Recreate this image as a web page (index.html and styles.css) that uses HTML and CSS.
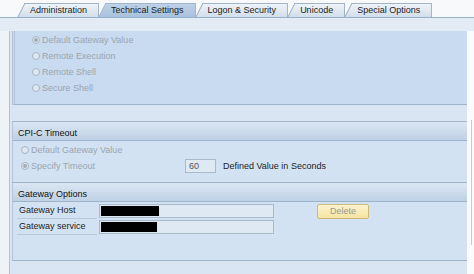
FILE: index.html
```html
<!DOCTYPE html>
<html lang="en">
<head>
    <meta charset="UTF-8">
    <title>Technical Settings</title>
    <link rel="stylesheet" href="styles.css">
</head>
<body>
    <div class="tabs">
        <div class="tab">Administration</div>
        <div class="tab active">Technical Settings</div>
        <div class="tab">Logon &amp; Security</div>
        <div class="tab">Unicode</div>
        <div class="tab">Special Options</div>
    </div>
    <div class="strip"></div>

    <div class="main">
        <div class="gutter"></div>
        <div class="content">
            <!-- connection type -->
            <div class="group radios">
                <div class="radio disabled checked"><span class="dot"></span>Default Gateway Value</div>
                <div class="radio disabled"><span class="dot"></span>Remote Execution</div>
                <div class="radio disabled"><span class="dot"></span>Remote Shell</div>
                <div class="radio disabled"><span class="dot"></span>Secure Shell</div>
            </div>

            <div class="group cpic">
                <div class="group-title">CPI-C Timeout</div>
                <div class="group-body">
                    <div class="radio disabled"><span class="dot"></span>Default Gateway Value</div>
                    <div class="row">
                        <div class="radio disabled checked wide"><span class="dot"></span>Specify Timeout</div>
                        <div class="field small">60</div>
                        <span class="hint">Defined Value in Seconds</span>
                    </div>
                </div>
            </div>

            <div class="group gateway">
                <div class="group-title">Gateway Options</div>
                <div class="group-body">
                    <div class="row">
                        <div class="label">Gateway Host</div>
                        <div class="field"><span class="redact"></span></div>
                        <button type="button" class="btn" disabled>Delete</button>
                    </div>
                    <div class="row">
                        <div class="label">Gateway service</div>
                        <div class="field"><span class="redact short"></span></div>
                    </div>
                </div>
            </div>
        </div>
        <div class="side"><div class="side-line"></div></div>
    </div>
</body>
</html>
```

FILE: styles.css
```css
body {
    margin: 0;
    width: 474px;
    height: 274px;
    overflow: hidden;
    background: #f3f6f9;
    font-family: 'Liberation Sans', Arial, sans-serif;
    font-size: 9px;
    color: #1a1a1a;
}
.tabs {
    position: relative;
    z-index: 0;
    display: flex;
    align-items: flex-end;
    height: 17px;
    padding-left: 18px;
    background: #f7f9fb;
}
.tab {
    position: relative;
    height: 13px;
    line-height: 13px;
    margin-left: 7px;
    padding: 0 11px 0 5px;
    border-top: 1px solid #a3b5c8;
    border-right: 1px solid #a3b5c8;
    background: linear-gradient(#eef3f8, #d2deea);
    color: #222;
}
.tab::before {
    content: '';
    position: absolute;
    top: -1px;
    bottom: 0;
    left: -4px;
    width: 12px;
    background: inherit;
    border-top: 1px solid #a3b5c8;
    border-left: 1px solid #93a8be;
    transform: skewX(-27deg);
    z-index: -1;
}
.tab.active {
    background: linear-gradient(#bed2e8, #a8c1dc);
}
.strip {
    height: 13px;
    border-top: 1px solid #98b1cb;
    background: #e3ebf4;
}
.main {
    display: flex;
    height: 243px;
}
.gutter {
    width: 9px;
    background: #eef3f8;
    border-right: 1px solid #b4c3d3;
}
.content {
    flex: 1;
    background: #d9e5f2;
    padding-left: 2px;
}
.side {
    width: 3px;
    padding: 89px 0 29px 4px;
    background: #fafbfc;
}
.side-line {
    height: 100%;
    border-left: 1px solid #c4cdd7;
}

.group {
    border-left: 1px solid #b3c4d6;
    border-bottom: 1px solid #9fb3c8;
}
.radios {
    height: 72px;
    padding: 1px 0 0 17px;
    background: #c8dbf0;
    border-left: 3px double #b0c2d5;
    margin-bottom: 16px;
}
.cpic {
    border-top: 1px solid #a4b7cb;
}
.group-title {
    height: 13px;
    line-height: 13px;
    padding: 5px 0 0 5px;
    border-bottom: 1px solid #a0b4c9;
    background: linear-gradient(#dbe6f2, #bfd1e5);
    color: #111;
}
.group-body {
    background: #d3e2f2;
}
.cpic .group-body {
    height: 40px;
    padding: 1px 0 0 8px;
}
.gateway .group-body {
    height: 57px;
    padding: 1px 0 0 4px;
}

.radio {
    display: flex;
    align-items: center;
    height: 16px;
}
.radio.disabled {
    color: #9ba5b0;
}
.radio.wide {
    width: 164px;
}
.dot {
    position: relative;
    width: 6px;
    height: 6px;
    margin-right: 2px;
    border: 1px solid #a8b4c1;
    border-radius: 50%;
    background: #dfe8f2;
}
.radio.checked .dot::after {
    content: '';
    position: absolute;
    left: 1px;
    top: 1px;
    width: 4px;
    height: 4px;
    border-radius: 50%;
    background: #a3acb6;
}

.row {
    display: flex;
    align-items: center;
    height: 16px;
}
.field {
    box-sizing: border-box;
    width: 175px;
    height: 14px;
    padding: 1px;
    border: 1px solid #a9bacb;
    background: #dfe9f3;
    color: #555;
    line-height: 10px;
}
.field.small {
    width: 31px;
    padding-left: 3px;
}
.hint {
    margin-left: 7px;
    color: #222;
}
.redact {
    display: block;
    width: 58px;
    height: 10px;
    background: #000;
}
.redact.short {
    width: 56px;
}
.label {
    box-sizing: border-box;
    width: 80px;
    height: 16px;
    line-height: 14px;
    margin-right: 2px;
    padding-left: 2px;
    border-bottom: 1px solid #b9c9da;
    color: #222;
}
.btn {
    width: 52px;
    height: 15px;
    margin-left: 43px;
    padding: 0;
    border: 1px solid #cbb97e;
    border-radius: 2px;
    background: linear-gradient(#fdf4cf, #f5e3a1);
    color: #9a9a8c;
    font-family: inherit;
    font-size: 9px;
}
```
